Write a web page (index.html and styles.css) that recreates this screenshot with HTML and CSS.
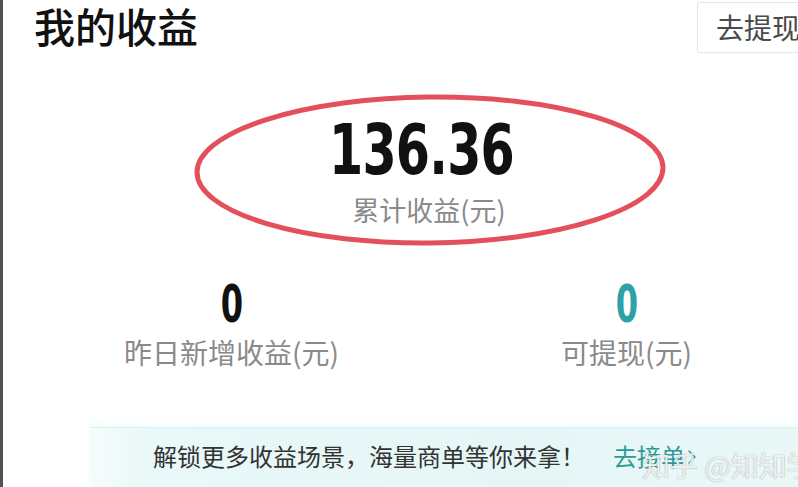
FILE: index.html
```html
<!DOCTYPE html>
<html lang="zh-CN">
<head>
<meta charset="utf-8">
<title>我的收益</title>
<link rel="stylesheet" href="styles.css">
</head>
<body>
<div class="screen">
  <div class="edge"></div>
  <main class="page">
    <header class="head">
      <h1 class="title">我的收益</h1>
      <button class="withdraw" type="button">去提现</button>
    </header>

    <section class="total">
      <svg class="mark" width="480" height="160" viewBox="0 0 480 160" aria-hidden="true">
        <ellipse cx="240" cy="80" rx="233" ry="73" fill="none" stroke="#e3505c" stroke-width="5" transform="rotate(-0.6 240 80)"/>
      </svg>
      <div class="amount"><span class="digits">136.36</span></div>
      <div class="caption">累计收益(元)</div>
    </section>

    <section class="stats">
      <div class="stat">
        <div class="stat-value"><span class="digits">0</span></div>
        <div class="caption">昨日新增收益(元)</div>
      </div>
      <div class="stat">
        <div class="stat-value teal"><span class="digits">0</span></div>
        <div class="caption">可提现(元)</div>
      </div>
    </section>

    <div class="promo">
      <span class="promo-text">解锁更多收益场景，海量商单等你来拿！</span>
      <a class="promo-link" href="#">去接单<svg class="chev" width="10" height="16" viewBox="0 0 10 16" aria-hidden="true"><path d="M2 2 L8 8 L2 14" fill="none" stroke="#2a9a95" stroke-width="1.4" stroke-linecap="round" stroke-linejoin="round"/></svg></a>
    </div>
  </main>
  <div class="watermark">知乎 @知知学</div>
</div>
</body>
</html>
```

FILE: styles.css
```css
* {
  box-sizing: border-box;
}

html,
body {
  margin: 0;
  padding: 0;
  background: #ffffff;
  overflow: hidden;
}

body {
  width: 798px;
  height: 487px;
  font-family: "Noto Sans CJK SC", "Noto Sans", sans-serif;
  color: #111;
}

.screen {
  position: relative;
  display: flex;
  width: 798px;
  height: 487px;
  overflow: hidden;
}

.edge {
  flex: 0 0 3px;
  background: #525252;
}

.page {
  flex: 0 0 auto;
  width: 821px;
  padding-left: 31px;
  display: flex;
  flex-direction: column;
}

/* header: page title + withdraw button */
.head {
  display: flex;
  justify-content: space-between;
  align-items: flex-start;
  height: 53px;
}

.title {
  margin: 0;
  font-size: 41px;
  line-height: 50px;
  font-weight: 500;
  color: #111;
}

.withdraw {
  margin-top: 2px;
  width: 127px;
  height: 51px;
  padding: 0 0 0 18px;
  text-align: left;
  border: 1px solid #e6e6e6;
  border-radius: 2px;
  background: #fff;
  font-family: inherit;
  font-size: 28px;
  line-height: 47px;
  color: #4a4a4a;
}

/* cumulative earnings block */
.total {
  position: relative;
  margin-top: 56px;
  display: flex;
  flex-direction: column;
  align-items: center;
}

.mark {
  position: absolute;
  left: 156px;
  top: -19px;
  pointer-events: none;
}

.digits {
  display: inline-block;
  font-family: "DejaVu Sans Condensed", "DejaVu Sans", sans-serif;
  font-stretch: condensed;
  font-weight: 700;
  transform: scaleX(0.78);
  transform-origin: center;
}

.amount {
  margin-right: 14px;
  font-size: 70px;
  line-height: 70px;
  color: #111;
  letter-spacing: -1px;
}

.caption {
  font-size: 28px;
  line-height: 28px;
  color: #8a8a8a;
}

.total .caption {
  margin-top: 11px;
  font-size: 27px;
}

/* yesterday / withdrawable */
.stats {
  margin-top: 51px;
  display: grid;
  grid-template-columns: 395px 395px;
}

.stat {
  display: flex;
  flex-direction: column;
  align-items: center;
}

.stat-value {
  font-size: 51px;
  line-height: 51px;
  color: #111;
}

.stat-value .digits {
  transform: scaleX(0.7);
}

.stat-value.teal {
  color: #2aa2a6;
}

.stat .caption {
  margin-top: 8px;
}

/* bottom promo banner */
.promo {
  margin-top: 61px;
  margin-left: 56px;
  height: 60px;
  padding-left: 63px;
  padding-bottom: 4px;
  display: flex;
  align-items: center;
  border-top: 1px solid #d8f3f3;
  background: linear-gradient(90deg, rgba(236, 249, 249, 0.5) 0%, #e9f8f8 8%, #e6f6f6 60%, #e9f7f7 100%);
  box-shadow: 0 -2px 6px rgba(190, 235, 235, 0.25);
}

.promo-text {
  font-size: 24px;
  line-height: 30px;
  color: #333;
}

.promo-link {
  margin-left: 28px;
  display: inline-flex;
  align-items: center;
  gap: 2px;
  font-size: 24px;
  line-height: 30px;
  color: #2a9a95;
  text-decoration: none;
}

.chev {
  margin-top: 2px;
}

/* overlay watermark */
.watermark {
  position: absolute;
  left: 642px;
  top: 447px;
  font-size: 28px;
  line-height: 36px;
  white-space: nowrap;
  color: rgba(255, 255, 255, 0.85);
  text-shadow: 0 0 1px rgba(120, 120, 120, 0.6), 0 0 1px rgba(120, 120, 120, 0.35);
}
```
